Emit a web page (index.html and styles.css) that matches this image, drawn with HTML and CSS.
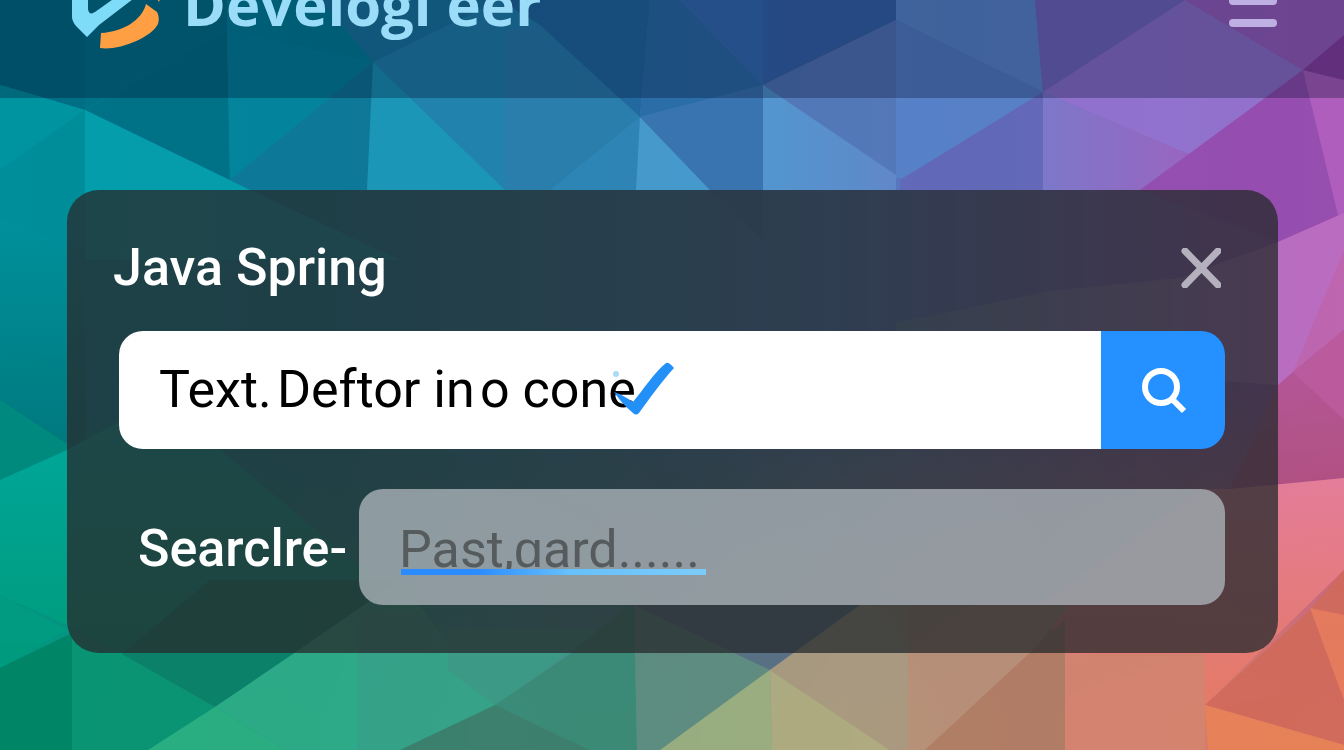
FILE: index.html
```html
<!DOCTYPE html>
<html lang="en">
<head>
<meta charset="utf-8">
<meta name="viewport" content="width=device-width, initial-scale=1">
<title>Develogi eer</title>
<link rel="stylesheet" href="styles.css">
</head>
<body>
<svg class="backdrop" viewBox="0 0 1344 750" preserveAspectRatio="none" aria-hidden="true">
  <defs>
    <linearGradient id="upper">
      <stop offset="0" stop-color="#008f9c"/><stop offset=".25" stop-color="#0c809c"/><stop offset=".45" stop-color="#2c82b0"/><stop offset=".62" stop-color="#4c7cc0"/><stop offset=".8" stop-color="#7a66bc"/><stop offset="1" stop-color="#a84eae"/>
    </linearGradient>
    <linearGradient id="lower">
      <stop offset="0" stop-color="#009878"/><stop offset=".2" stop-color="#189878"/><stop offset=".35" stop-color="#3c9c84"/><stop offset=".5" stop-color="#5c8c80"/><stop offset=".62" stop-color="#a09c80"/><stop offset=".8" stop-color="#cc8070"/><stop offset="1" stop-color="#e07860"/>
    </linearGradient>
    <linearGradient id="fade" x2="0" y2="1">
      <stop offset=".5" stop-color="#000"/><stop offset=".95" stop-color="#fff"/>
    </linearGradient>
    <mask id="fadeDown"><rect width="1344" height="750" fill="url(#fade)"/></mask>
    <linearGradient id="leftTeal" x2="0" y2="1"><stop offset="0" stop-color="#00919c"/><stop offset="1" stop-color="#007478"/></linearGradient>
    <linearGradient id="leftGreen" x2="0" y2="1"><stop offset="0" stop-color="#00aba0"/><stop offset="1" stop-color="#009c7c"/></linearGradient>
    <linearGradient id="coral" x2="0" y2="1"><stop offset="0" stop-color="#e8809a"/><stop offset="1" stop-color="#e67a66"/></linearGradient>
    <linearGradient id="rose" x2="0" y2="1"><stop offset="0" stop-color="#b85a9c"/><stop offset="1" stop-color="#b05080"/></linearGradient>
    <linearGradient id="orchid" gradientUnits="userSpaceOnUse" x1="896" x2="1278"><stop offset="0" stop-color="#6488b4"/><stop offset="1" stop-color="#bc70c2"/></linearGradient>
    <linearGradient id="violet"><stop offset="0" stop-color="#7d7acc"/><stop offset="1" stop-color="#9a66c0"/></linearGradient>
    <linearGradient id="sky"><stop offset="0" stop-color="#5498d2"/><stop offset="1" stop-color="#628aca"/></linearGradient>
  </defs>
  <rect width="1344" height="750" fill="url(#upper)"/>
  <rect width="1344" height="750" fill="url(#lower)" mask="url(#fadeDown)"/>
  <g opacity=".92">
    <path fill="#006c84" d="M0 0H85V110L0 85Z"/>
    <path fill="#007288" d="M85 0H227V30L85 110Z"/>
    <path fill="#007186" d="M85 110L227 30L230 180Z"/>
    <path fill="#008398" d="M227 0H320L373 62L227 30Z"/>
    <path fill="#04859c" d="M227 30L373 62L230 180Z"/>
    <path fill="#0f7898" d="M373 62L367 190L250 190L230 180Z"/>
    <path fill="#0095a2" d="M0 85L85 110L0 170Z"/>
    <path fill="#008e9a" d="M0 170L85 110V250L0 220Z"/>
    <path fill="#059fae" d="M85 110L250 190L400 260H85Z"/>
    <path fill="url(#leftTeal)" d="M0 220L85 250V440L67 450L0 480Z"/>
    <path fill="#00897c" d="M0 400L67 444V450L0 480Z"/>
    <path fill="#1a78a0" d="M320 0H500L373 62Z"/>
    <path fill="#2284ae" d="M373 62L500 0L540 25L505 190Z"/>
    <path fill="#1c98b8" d="M373 62L505 190H367Z"/>
    <path fill="#2a7eac" d="M505 30L540 25L640 117L550 190H505Z"/>
    <path fill="#20689e" d="M500 0H650L640 117L540 25Z"/>
    <path fill="#2a6ca6" d="M650 0H680L763 85L640 117Z"/>
    <path fill="#346cb4" d="M680 0H763V85Z"/>
    <path fill="#3664aa" d="M763 0H896V20L763 85Z"/>
    <path fill="#2e86b6" d="M640 117L636 190H550Z"/>
    <path fill="#489cce" d="M640 117L710 190H636Z"/>
    <path fill="#3a74b0" d="M640 117L763 85V240L710 190Z"/>
    <path fill="#5478b8" d="M763 85L896 20V175Z"/>
    <path fill="url(#sky)" d="M763 85L896 175V190H763Z"/>
    <path fill="#5c8cd0" d="M896 0H1035L1043 92L896 20Z"/>
    <path fill="#5682c8" d="M896 20L1043 92L905 178H896Z"/>
    <path fill="#6268b8" d="M1043 92V190H900V180Z"/>
    <path fill="#7468c0" d="M1035 0H1185L1043 92Z"/>
    <path fill="#9274d0" d="M1043 92L1185 0L1303 70L1190 155Z"/>
    <path fill="url(#violet)" d="M1043 92L1190 155L1140 190H1043Z"/>
    <path fill="#9c60c0" d="M1185 0H1344V35L1303 70Z"/>
    <path fill="#954eb0" d="M1303 70L1338 215L1278 242L1140 190Z"/>
    <path fill="#b060c0" d="M1303 70L1344 80V215L1338 215Z"/>
    <path fill="#893fa0" d="M1344 35V80L1303 70Z"/>
    <path fill="url(#orchid)" d="M1344 213L1278 242L1180 278L1050 291L896 323L900 360L1278 385L1293 372L1344 270Z"/>
    <path fill="#c068b0" d="M1344 250V330L1293 372Z"/>
    <path fill="url(#rose)" d="M1344 330V478L1230 489L1278 385Z"/>
    <path fill="#bd5c9c" d="M1344 330V420L1293 372Z"/>
    <path fill="url(#coral)" d="M1344 478V570L1205 705L1065 654L1040 605L1200 489H1230Z"/>
    <path fill="url(#leftGreen)" d="M0 480L67 450L160 400L400 600L293 654H122L67 625L0 595Z"/>
    <path fill="#009c80" d="M0 595L67 630L0 668Z"/>
    <path fill="#008466" d="M0 668L72 633V750H0Z"/>
    <path fill="#0a9474" d="M72 630L122 654L215 707L148 750H72Z"/>
    <path fill="#0c8068" d="M122 654L210 580H400L293 654L215 707Z"/>
    <path fill="#2eac88" d="M215 707L293 654L400 580L495 705L400 750H285Z"/>
    <path fill="#2cb082" d="M215 707L285 750H148Z"/>
    <path fill="#3c9c8a" d="M357 610H420L495 705L400 750H357Z" opacity=".6"/>
    <path fill="#3c9a86" d="M448 670V630H600L495 705Z"/>
    <path fill="#3a8a76" d="M495 705L570 654L634 600L637 750H590Z"/>
    <path fill="#3c7e6c" d="M495 705L590 750H400Z"/>
    <path fill="#5e8c80" d="M634 600L770 670L660 750H637Z"/>
    <path fill="#566e84" d="M634 605H860L770 670Z"/>
    <path fill="#9cb080" d="M770 670L772 750H660Z"/>
    <path fill="#b0ac80" d="M770 670L890 750H772Z"/>
    <path fill="#aa9a80" d="M770 670L860 605H908V750H890Z"/>
    <path fill="#b89078" d="M908 605H1070L1030 654L925 750H908Z"/>
    <path fill="#b07c64" d="M1065 620V750H925Z"/>
    <path fill="#d48470" d="M1065 654H1205V750H1065Z"/>
    <path fill="#d06a5c" d="M1344 570V745L1205 705L1310 610Z"/>
    <path fill="#e67c5c" d="M1310 608L1344 615V700Z"/>
    <path fill="#e88258" d="M1205 705L1344 745V750H1208Z"/>
  </g>
</svg>

<header class="topbar">
  <div class="topbar-row">
    <a class="brand" href="#">
      <svg class="brand-mark" viewBox="0 0 90 90" aria-hidden="true">
        <path fill="#7fdcf8" d="M1 16Q1 12 5 10L17 4V50Q18 57 24 53L62 26L66 37L28 66L16 78L5 67Q1 62 1 58Z"/>
        <path fill="#ff9f43" d="M75 45L86 53Q89 58 87 65C80 79 47 92 29 89L30 74C52 73 71 61 75 45Z"/>
        <path fill="#ff9f43" d="M85 38L89 40L88 43Z"/>
      </svg>
      <span class="brand-name">Develogi eer</span>
    </a>
    <button class="icon-button" type="button" aria-label="Menu">
      <svg class="menu-icon" viewBox="0 0 48 56" aria-hidden="true">
        <g fill="#beb0e2"><rect width="48" height="8" rx="4"/><rect y="21" width="48" height="8" rx="4"/><rect y="43" width="48" height="8" rx="4"/></g>
      </svg>
    </button>
  </div>
</header>

<main class="card">
  <div class="card-head">
    <h1 class="card-title">Java Spring</h1>
    <button class="icon-button" type="button" aria-label="Close">
      <svg class="close-icon" viewBox="0 0 40 40" aria-hidden="true">
        <path d="M4 3L37 37M37 3L4 37" fill="none" stroke="#b5b0bd" stroke-width="7" stroke-linecap="round"/>
      </svg>
    </button>
  </div>

  <form class="search">
    <input class="field search-input" type="text" aria-label="Search text" value="Text.&#8202;Deftor in&#8202;o cone">
    <svg class="tick" viewBox="0 0 64 56" aria-hidden="true">
      <circle cx="6" cy="13" r="3" fill="#a9dcf5"/>
      <path fill="#2390f8" d="M4 31Q13 34 23 41C33 29 43 13 56 2Q59 1 64 7C52 20 40 37 29 52Q26 55 23 52Q12 43 4 31Z"/>
    </svg>
    <button class="search-button" type="submit" aria-label="Search">
      <svg class="search-icon" viewBox="0 0 48 48" aria-hidden="true">
        <g fill="none" stroke="#fff"><circle cx="22" cy="21" r="16" stroke-width="6"/><path d="M33 33L45 45" stroke-width="6"/></g>
      </svg>
    </button>
  </form>

  <div class="filter">
    <label class="filter-label" for="filter">Searclre-</label>
    <div class="filter-box">
      <input class="field filter-input" id="filter" type="text" placeholder="Past,ɑard......">
    </div>
  </div>
</main>
</body>
</html>
```
FILE: styles.css
```css
* {
  box-sizing: border-box;
}

body {
  margin: 0;
  min-height: 100vh;
  overflow: hidden;
  background: #1c8a98;
  font-family: Roboto, "Liberation Sans", sans-serif;
  font-size: 52px;
  line-height: 60px;
}

.backdrop {
  position: fixed;
  inset: 0;
  z-index: -1;
  width: 100%;
  height: 100%;
}

.topbar {
  display: flow-root;
  padding: 0 67px 49px 71px;
  background: rgba(0, 10, 40, 0.3);
}

.topbar-row {
  display: flex;
  align-items: center;
  justify-content: space-between;
  margin-top: -41px;
}

.brand {
  display: flex;
  align-items: center;
  gap: 22px;
  color: #9bdcf8;
  text-decoration: none;
}

.brand-mark {
  width: 90px;
  height: 90px;
}

.brand-name {
  font-family: "Open Sans", "Noto Sans", sans-serif;
  font-size: 58px;
  font-weight: 700;
  line-height: 80px;
}

.icon-button {
  display: flex;
  padding: 0;
  border: 0;
  background: none;
  cursor: pointer;
}

.menu-icon {
  width: 48px;
  height: 56px;
}

.card {
  margin: 92px 66px 0 67px;
  padding: 48px 53px 48px 52px;
  border-radius: 32px;
  background: rgba(38, 42, 45, 0.76);
}

.card-head {
  display: flex;
  align-items: center;
  justify-content: space-between;
  margin: 0 4px 33px -6px;
}

.card-title {
  margin: 0;
  color: #fff;
  font-size: 52px;
  font-weight: 500;
}

.close-icon {
  width: 40px;
  height: 40px;
}

.field {
  width: 100%;
  min-width: 0;
  border: 0;
  outline: 0;
  padding: 0 40px;
  font: inherit;
}

.search {
  position: relative;
  display: flex;
  height: 118px;
  margin-bottom: 40px;
  border-radius: 24px;
  overflow: hidden;
}

.search-input {
  flex: 1;
  background: #fff;
  color: #000;
}

.tick {
  position: absolute;
  top: 30px;
  left: 491px;
  width: 64px;
  height: 56px;
}

.search-button {
  display: flex;
  align-items: center;
  justify-content: center;
  width: 124px;
  padding: 0;
  border: 0;
  background: #2590ff;
  cursor: pointer;
}

.search-icon {
  width: 48px;
  height: 48px;
}

.filter {
  display: flex;
  align-items: center;
  gap: 12px;
  padding-left: 19px;
}

.filter-label {
  padding-top: 4px;
  color: #fff;
  font-weight: 500;
}

.filter-box {
  position: relative;
  flex: 1;
}

.filter-box::after {
  content: "";
  position: absolute;
  top: 80px;
  left: 42px;
  width: 305px;
  height: 6px;
  background: linear-gradient(90deg, #2a8cff 25%, #66c0fa 55%, #7cccfa);
}

.filter-input {
  display: block;
  height: 116px;
  padding-top: 4px;
  border-radius: 24px;
  background: rgba(170, 178, 184, 0.8);
  color: #333;
}

.filter-input::placeholder {
  color: #565b5e;
  opacity: 1;
}
```
